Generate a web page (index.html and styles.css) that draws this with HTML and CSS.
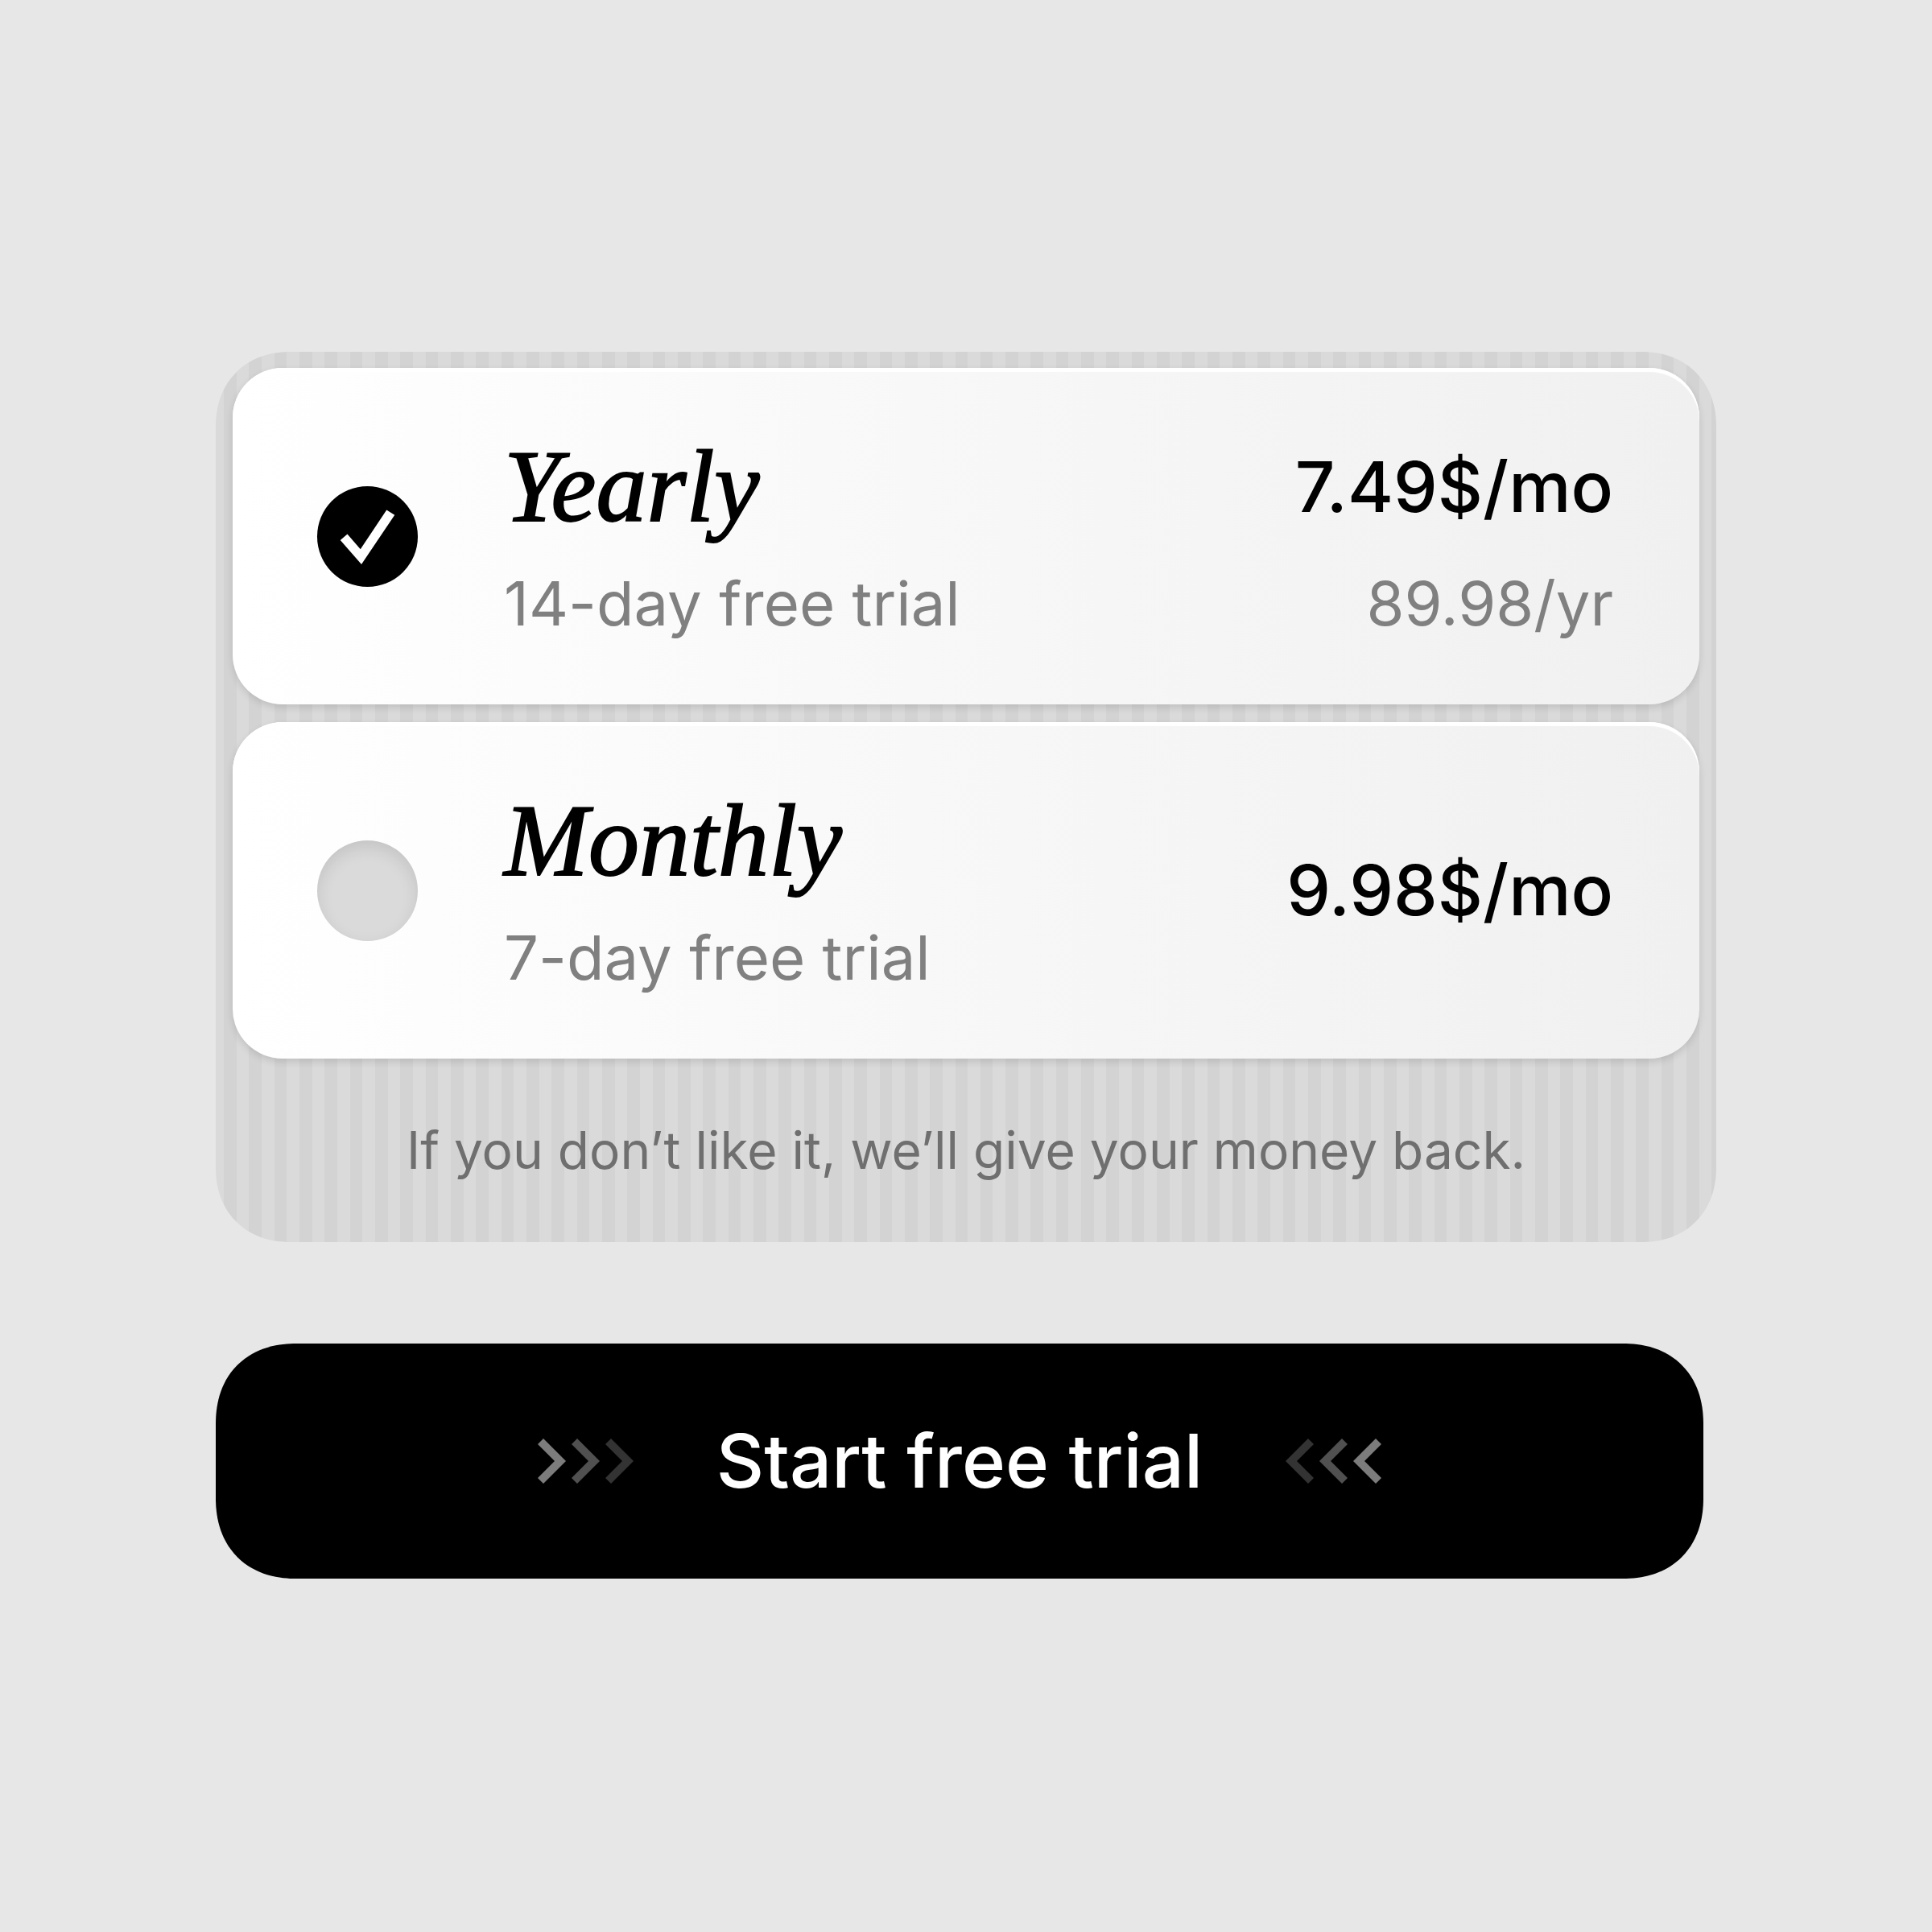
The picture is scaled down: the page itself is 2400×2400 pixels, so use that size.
FILE: index.html
```html
<!DOCTYPE html>
<html lang="en">
<head>
<meta charset="utf-8">
<meta name="viewport" content="width=device-width, initial-scale=1">
<title>Choose a plan</title>
<link rel="stylesheet" href="styles.css">
</head>
<body>
<form class="paywall">
  <section class="panel">
    <div class="plans">
      <label class="plan" for="plan-yearly">
        <input class="plan-radio" type="radio" id="plan-yearly" name="plan" value="yearly" checked>
        <span class="plan-info">
          <span class="plan-name">Yearly</span>
          <span class="plan-detail">14-day free trial</span>
        </span>
        <span class="plan-cost">
          <span class="plan-price">7.49$/mo</span>
          <span class="plan-detail">89.98/yr</span>
        </span>
      </label>
      <label class="plan" for="plan-monthly">
        <input class="plan-radio" type="radio" id="plan-monthly" name="plan" value="monthly">
        <span class="plan-info">
          <span class="plan-name">Monthly</span>
          <span class="plan-detail">7-day free trial</span>
        </span>
        <span class="plan-cost">
          <span class="plan-price">9.98$/mo</span>
        </span>
      </label>
    </div>
    <p class="note">If you don’t like it, we’ll give your money back.</p>
  </section>
  <button class="start" type="button">
    <svg class="chevrons" viewBox="0 0 119 56" aria-hidden="true">
      <path fill="#7c7c7c" d="M0 7 7 0 35 28 7 56 0 49 21 28z"/>
      <path fill="#505050" d="M42 7 49 0 77 28 49 56 42 49 63 28z"/>
      <path fill="#333333" d="M84 7 91 0 119 28 91 56 84 49 105 28z"/>
    </svg>
    <span>Start free trial</span>
    <svg class="chevrons" viewBox="0 0 119 56" aria-hidden="true">
      <path fill="#333333" d="M35 7 28 0 0 28 28 56 35 49 14 28z"/>
      <path fill="#505050" d="M77 7 70 0 42 28 70 56 77 49 56 28z"/>
      <path fill="#7c7c7c" d="M119 7 112 0 84 28 112 56 119 49 98 28z"/>
    </svg>
  </button>
</form>
</body>
</html>
```

FILE: styles.css
```css
* {
  box-sizing: border-box;
}

body {
  margin: 0;
  background: #e7e7e7;
  color: #000;
  font-family: Inter, "Liberation Sans", sans-serif;
}

.paywall {
  display: flex;
  flex-direction: column;
  justify-content: center;
  gap: 126px;
  min-height: 100vh;
  padding: 0 268px 2px;
}

.panel {
  padding: 20px 21px 0;
  border-radius: 92px;
  corner-shape: superellipse(1.1);
  background: repeating-linear-gradient(
    90deg,
    #d3d3d3 10px calc(10px + 100% / 119),
    #dadada calc(10px + 100% / 119) calc(10px + 100% / 59.5)
  );
}

.plans {
  display: flex;
  flex-direction: column;
  gap: 22px;
}

.plan {
  display: flex;
  align-items: center;
  gap: 107px;
  padding: 80px 107px 80px 105px;
  border-radius: 62px;
  background: linear-gradient(90deg, #fff, #f0f0f0);
  box-shadow: inset 0 5px 1px #fff, 0 4px 10px rgba(0, 0, 0, 0.12);
  cursor: pointer;
}

.plan-radio {
  appearance: none;
  flex: none;
  width: 125px;
  height: 125px;
  margin: 0;
  border-radius: 50%;
  background: #dadada;
  box-shadow: inset 0 8px 20px rgba(0, 0, 0, 0.1);
}

.plan-radio:checked {
  background: #000;
  box-shadow: none;
}

.plan-radio:checked::before {
  content: "";
  display: block;
  height: 100%;
  background: #fff;
  clip-path: polygon(23% 54%, 30% 48%, 43% 63%, 69% 24%, 77% 29%, 44% 78%);
}

.plan-info,
.plan-cost {
  display: flex;
  flex-direction: column;
  gap: 30px;
}

.plan-cost {
  margin-left: auto;
  text-align: right;
}

.plan-name {
  font: italic 126px/136px "Liberation Serif", serif;
  -webkit-text-stroke: 2px #000;
}

.plan-price {
  font-size: 87px;
  line-height: 136px;
  font-weight: 500;
}

.plan-detail {
  color: #808080;
  font-size: 76px;
  line-height: 92px;
}

.note {
  margin: 0;
  padding: 74px 0;
  color: #6f6f6f;
  font-size: 64px;
  line-height: 80px;
  text-align: center;
}

.start {
  display: flex;
  align-items: center;
  justify-content: center;
  gap: 103px;
  margin: 0 16px 0 0;
  padding: 92px;
  border: 0;
  border-radius: 100px;
  corner-shape: superellipse(1.15);
  background: #000;
  color: #fff;
  font: 500 92px/108px Inter, "Liberation Sans", sans-serif;
  cursor: pointer;
}

.chevrons {
  width: 119px;
  height: 56px;
}
```
